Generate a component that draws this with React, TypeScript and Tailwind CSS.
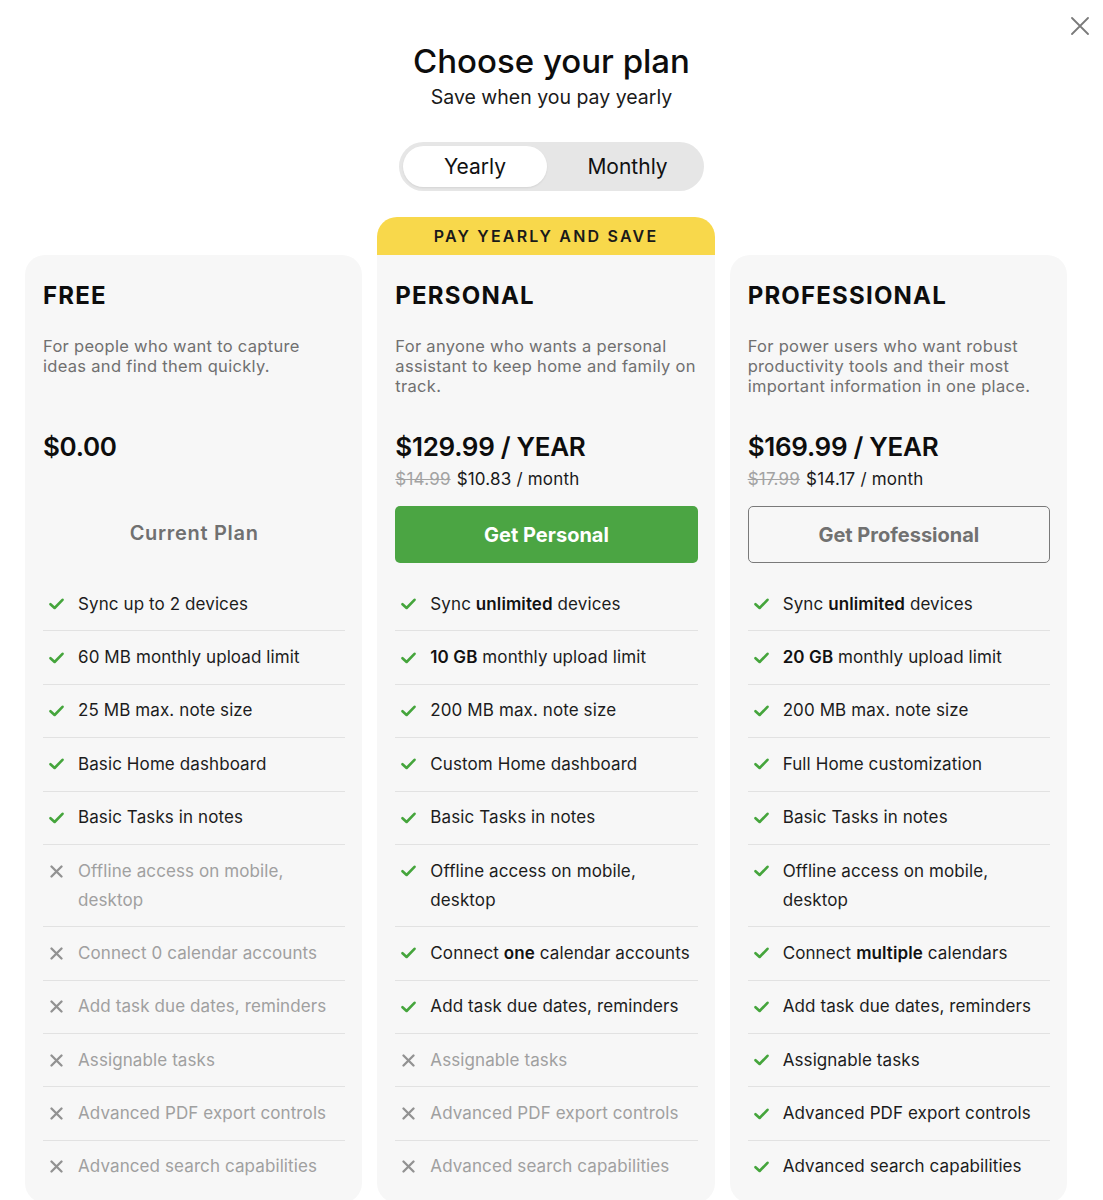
import type { ReactNode } from "react";

type Feature = { text: ReactNode; on: boolean };

type Plan = {
  name: string;
  desc: string;
  price: string;
  was?: string;
  monthly?: string;
  cta: "current" | "primary" | "outline";
  ctaLabel: string;
  banner?: string;
  features: Feature[];
};

const b = (s: string) => <span className="font-semibold text-[#111]">{s}</span>;

const plans: Plan[] = [
  {
    name: "FREE",
    desc: "For people who want to capture ideas and find them quickly.",
    price: "$0.00",
    cta: "current",
    ctaLabel: "Current Plan",
    features: [
      { text: "Sync up to 2 devices", on: true },
      { text: "60 MB monthly upload limit", on: true },
      { text: "25 MB max. note size", on: true },
      { text: "Basic Home dashboard", on: true },
      { text: "Basic Tasks in notes", on: true },
      { text: "Offline access on mobile, desktop", on: false },
      { text: "Connect 0 calendar accounts", on: false },
      { text: "Add task due dates, reminders", on: false },
      { text: "Assignable tasks", on: false },
      { text: "Advanced PDF export controls", on: false },
      { text: "Advanced search capabilities", on: false },
    ],
  },
  {
    name: "PERSONAL",
    desc: "For anyone who wants a personal assistant to keep home and family on track.",
    price: "$129.99 / YEAR",
    was: "$14.99",
    monthly: "$10.83 / month",
    cta: "primary",
    ctaLabel: "Get Personal",
    banner: "PAY YEARLY AND SAVE",
    features: [
      { text: <>Sync {b("unlimited")} devices</>, on: true },
      { text: <>{b("10 GB")} monthly upload limit</>, on: true },
      { text: "200 MB max. note size", on: true },
      { text: "Custom Home dashboard", on: true },
      { text: "Basic Tasks in notes", on: true },
      { text: "Offline access on mobile, desktop", on: true },
      { text: <>Connect {b("one")} calendar accounts</>, on: true },
      { text: "Add task due dates, reminders", on: true },
      { text: "Assignable tasks", on: false },
      { text: "Advanced PDF export controls", on: false },
      { text: "Advanced search capabilities", on: false },
    ],
  },
  {
    name: "PROFESSIONAL",
    desc: "For power users who want robust productivity tools and their most important information in one place.",
    price: "$169.99 / YEAR",
    was: "$17.99",
    monthly: "$14.17 / month",
    cta: "outline",
    ctaLabel: "Get Professional",
    features: [
      { text: <>Sync {b("unlimited")} devices</>, on: true },
      { text: <>{b("20 GB")} monthly upload limit</>, on: true },
      { text: "200 MB max. note size", on: true },
      { text: "Full Home customization", on: true },
      { text: "Basic Tasks in notes", on: true },
      { text: "Offline access on mobile, desktop", on: true },
      { text: <>Connect {b("multiple")} calendars</>, on: true },
      { text: "Add task due dates, reminders", on: true },
      { text: "Assignable tasks", on: true },
      { text: "Advanced PDF export controls", on: true },
      { text: "Advanced search capabilities", on: true },
    ],
  },
];

function Check() {
  return (
    <svg width="15" height="12" viewBox="0 0 15 12" fill="none" aria-hidden="true">
      <path d="M1.5 6.2 5.6 10 13.5 1.8" stroke="#45a53c" strokeWidth="2.6" strokeLinecap="round" strokeLinejoin="round" />
    </svg>
  );
}

function Cross() {
  return (
    <svg width="13" height="13" viewBox="0 0 13 13" fill="none" aria-hidden="true">
      <path d="M1.5 1.5 11.5 11.5M11.5 1.5 1.5 11.5" stroke="#929292" strokeWidth="2.3" strokeLinecap="round" />
    </svg>
  );
}

function PlanCard({ plan }: { plan: Plan }) {
  return (
    <div className={plan.banner ? "flex flex-col" : "flex flex-col pt-[38px]"}>
      {plan.banner && (
        <div className="flex h-[38px] items-center justify-center rounded-t-[20px] bg-[#f8d84b] text-[16px] font-semibold tracking-[2.2px] text-[#1a1a1a]">
          {plan.banner}
        </div>
      )}
      <div
        className={`flex flex-col bg-[#f7f7f7] pb-[10px] pl-[18px] pr-[17px] pt-[26px] ${
          plan.banner ? "" : "rounded-t-[20px]"
        } rounded-b-[20px]`}
      >
        <h2 className="text-[24px] font-bold leading-[30px] tracking-[1.2px] text-[#0d0d0d]">{plan.name}</h2>
        <p className="mt-[25px] h-[60px] text-[16.5px] leading-[20px] tracking-[0.3px] text-[#707070]">{plan.desc}</p>
        <div className="mt-[35px] text-[26px] font-semibold leading-[32px] tracking-[-0.3px] text-[#0d0d0d]">
          {plan.price}
        </div>
        <div className="mt-[4px] h-[24px] text-[17px] leading-[24px] tracking-[0.2px] text-[#1a1a1a]">
          {plan.was && <span className="mr-[6px] text-[#a3a3a3] line-through">{plan.was}</span>}
          {plan.monthly}
        </div>
        <div className="mt-[15px] h-[57px]">
          {plan.cta === "current" && (
            <div className="flex h-full items-center justify-center pb-[3px] text-[20px] font-semibold tracking-[0.7px] text-[#707070]">
              {plan.ctaLabel}
            </div>
          )}
          {plan.cta === "primary" && (
            <button className="flex h-full w-full items-center justify-center rounded-[5px] bg-[#4ba543] text-[20px] font-bold text-white">
              {plan.ctaLabel}
            </button>
          )}
          {plan.cta === "outline" && (
            <button className="flex h-full w-full items-center justify-center rounded-[5px] border-[1.5px] border-[#7a7a7a] text-[20px] font-bold text-[#717171]">
              {plan.ctaLabel}
            </button>
          )}
        </div>
        <ul className="mt-[15px] flex flex-col">
          {plan.features.map((f, i) => (
            <li
              key={i}
              className={`flex items-start py-[11.7px] ${
                i < plan.features.length - 1 ? "border-b border-[#e2e2e2]" : ""
              }`}
            >
              <span className="flex h-[29px] w-[35px] shrink-0 items-center pl-[6px]">
                {f.on ? <Check /> : <span className="pl-[1px]"><Cross /></span>}
              </span>
              <span
                className={`text-[17px] leading-[29px] tracking-[0.1px] ${
                  f.on ? "text-[#1c1c1c]" : "text-[#a0a0a0]"
                }`}
              >
                {f.text}
              </span>
            </li>
          ))}
        </ul>
      </div>
    </div>
  );
}

export default function App() {
  return (
    <div className="relative min-h-screen bg-white" style={{ fontFamily: "Inter, 'Noto Sans', sans-serif" }}>
      <button className="absolute right-[14px] top-[17px] p-0" aria-label="Close">
        <svg width="18" height="18" viewBox="0 0 18 18" fill="none">
          <path d="M1 1 17 17M17 1 1 17" stroke="#7a7a7a" strokeWidth="1.8" strokeLinecap="round" />
        </svg>
      </button>

      <header className="flex flex-col items-center pt-[40px]">
        <h1 className="text-[33px] font-medium leading-[42px] text-[#0d0d0d]">Choose your plan</h1>
        <p className="mt-[2px] text-[19.5px] leading-[26px] text-[#1a1a1a]">Save when you pay yearly</p>
        <div className="mt-[32px] flex h-[49px] w-[305px] rounded-full bg-[#e6e6e6] p-[4px]">
          <button className="w-[144px] rounded-full bg-white text-[21px] text-[#111] shadow-[0_1px_2px_rgba(0,0,0,0.08)]">
            Yearly
          </button>
          <button className="flex-1 pl-[8px] text-[21px] text-[#111]">Monthly</button>
        </div>
      </header>

      <div className="ml-[25px] mt-[26px] grid w-[1042px] grid-cols-3 gap-[15px]">
        {plans.map((p) => (
          <PlanCard key={p.name} plan={p} />
        ))}
      </div>
    </div>
  );
}
